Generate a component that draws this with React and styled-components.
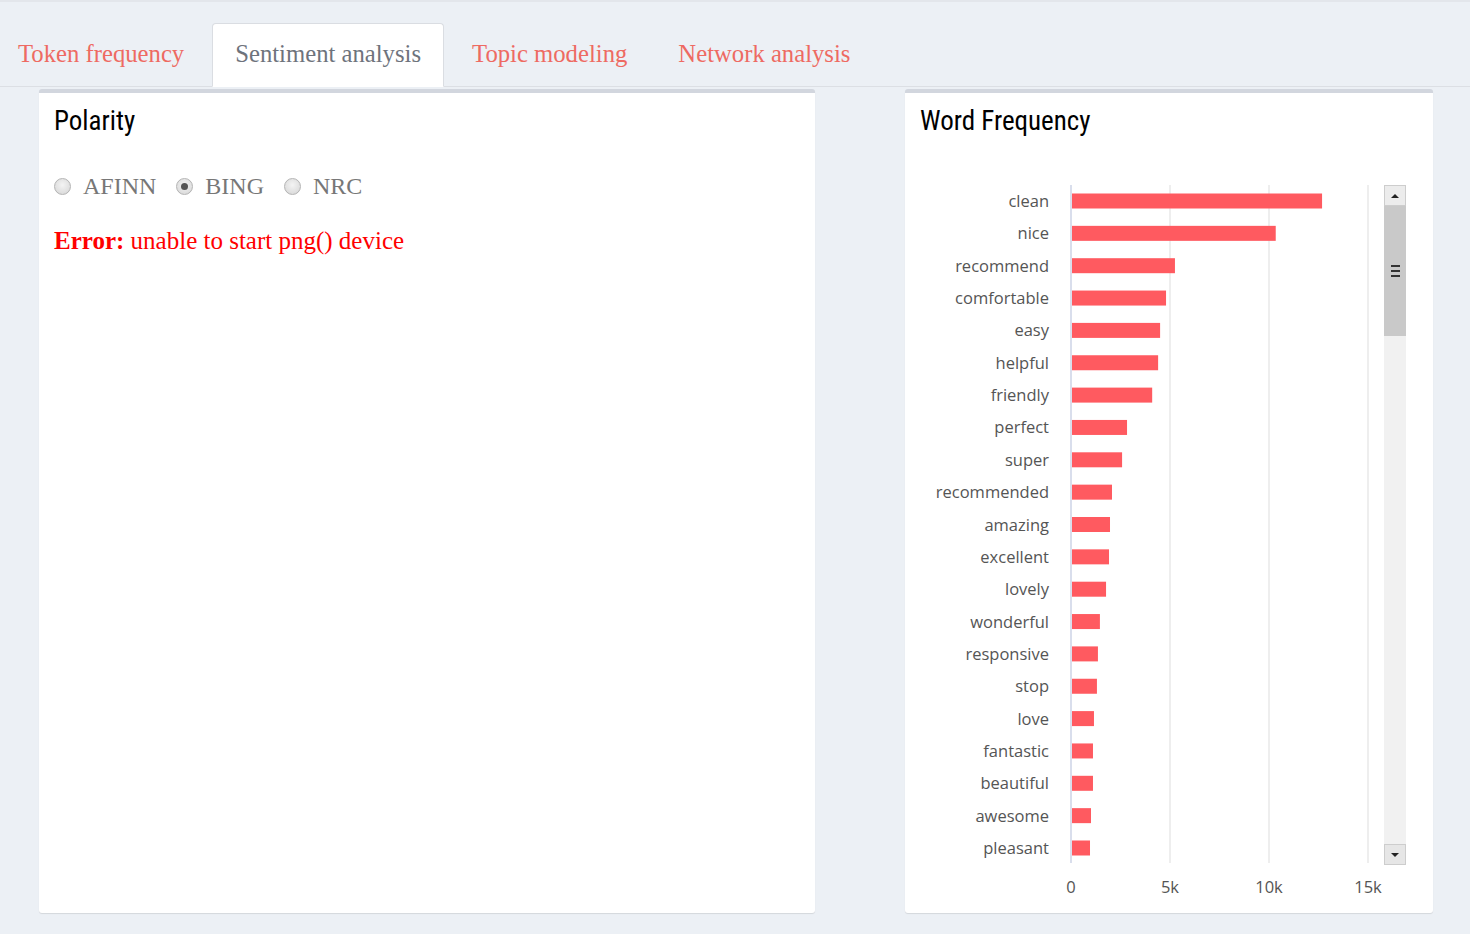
import React from 'react';
import styled, { createGlobalStyle } from 'styled-components';

const GlobalStyle = createGlobalStyle`
  html, body {
    margin: 0;
    padding: 0;
    background: #ecf0f5;
  }
  body {
    font-family: "Liberation Serif", serif;
  }
`;

const Page = styled.div`
  min-height: 934px;
  border-top: 2px solid #e3e6eb;
  box-sizing: border-box;
  background: #ecf0f5;
  overflow: hidden;
`;

const TabBar = styled.ul`
  display: flex;
  list-style: none;
  margin: 0;
  padding: 21px 0 0;
  margin-left: -5px;
  border-bottom: 1px solid #dcdfe4;
  height: 63px;
`;

const Tab = styled.li`
  margin-right: 5px;
  margin-bottom: -1px;
  padding: 17px 22px 20px;
  font-family: "Liberation Serif", serif;
  font-size: 24.7px;
  line-height: 25px;
  color: ${(p) => (p.active ? '#6e737c' : '#ee6a62')};
  background: ${(p) => (p.active ? '#fff' : 'transparent')};
  border: 1px solid ${(p) => (p.active ? '#dadde2' : 'transparent')};
  border-bottom-color: transparent;
  border-radius: 4px 4px 0 0;
  white-space: nowrap;
`;

const Columns = styled.div`
  display: grid;
  grid-template-columns: 776px 528px;
  column-gap: 90px;
  padding: 0 37px 0 39px;
  margin-top: 2px;
`;

const Box = styled.section`
  background: #fff;
  border-top: 4px solid #d2d6de;
  border-radius: 3px;
  box-shadow: 0 1px 1px rgba(0, 0, 0, 0.1);
  height: 824px;
  box-sizing: border-box;
`;

const BoxHeader = styled.div`
  padding: 12px 15px 0;
`;

const BoxTitle = styled.h3`
  margin: 0;
  font-family: "Liberation Sans Narrow", "Roboto Condensed", "Liberation Sans", sans-serif;
  font-weight: normal;
  font-size: 27px;
  line-height: 33px;
  color: #000;
`;

const BoxBody = styled.div`
  padding: 0 15px;
`;

const RadioRow = styled.div`
  display: flex;
  align-items: center;
  margin-top: 33px;
  height: 30px;
`;

const RadioLabel = styled.label`
  display: flex;
  align-items: center;
  margin-right: 20px;
  font-family: "Liberation Serif", serif;
  font-size: 24px;
  line-height: 30px;
  color: #777;
`;

const RadioDot = styled.span`
  width: 17px;
  height: 17px;
  box-sizing: border-box;
  border-radius: 50%;
  border: 1px solid #b4b4b4;
  background: radial-gradient(circle at 50% 40%, #f4f4f4, #d4d4d4);
  margin-right: 12px;
  display: flex;
  align-items: center;
  justify-content: center;
  &::after {
    content: '';
    width: 7px;
    height: 7px;
    border-radius: 50%;
    background: ${(p) => (p.checked ? '#555' : 'transparent')};
  }
`;

const ErrorLine = styled.div`
  margin-top: 25px;
  font-family: "Liberation Serif", serif;
  font-size: 25px;
  line-height: 30px;
  color: #f00;
  b {
    font-weight: bold;
  }
`;

const ChartRow = styled.div`
  display: flex;
  margin-top: 33px;
`;

const ChartSvg = styled.svg`
  display: block;
  overflow: visible;
  flex: none;
`;

const ScrollBar = styled.div`
  margin-top: 14px;
  margin-left: 4px;
  width: 22px;
  height: 680px;
  background: #f1f1f1;
  display: flex;
  flex-direction: column;
`;

const ScrollBtn = styled.div`
  height: 21px;
  box-sizing: border-box;
  background: ${(p) => (p.down ? '#e6e6e6' : '#ececec')};
  border: 1px solid #cdcdcd;
  display: flex;
  align-items: center;
  justify-content: center;
  margin-top: ${(p) => (p.down ? 'auto' : '0')};
  &::after {
    content: '';
    border-left: 4px solid transparent;
    border-right: 4px solid transparent;
    ${(p) => (p.down ? 'border-top: 4px solid #222;' : 'border-bottom: 4px solid #222;')}
  }
`;

const Thumb = styled.div`
  height: 130px;
  background: #c9c9c9;
  display: flex;
  flex-direction: column;
  align-items: center;
  justify-content: center;
  gap: 3px;
  span {
    width: 9px;
    height: 2px;
    background: #333;
  }
`;

const words = [
  ['clean', 12680], ['nice', 10340], ['recommend', 5250], ['comfortable', 4800],
  ['easy', 4500], ['helpful', 4400], ['friendly', 4100], ['perfect', 2830],
  ['super', 2580], ['recommended', 2070], ['amazing', 1970], ['excellent', 1920],
  ['lovely', 1770], ['wonderful', 1460], ['responsive', 1360], ['stop', 1310],
  ['love', 1160], ['fantastic', 1110], ['beautiful', 1110], ['awesome', 1010],
  ['pleasant', 960],
];

const X0 = 166;
const PER_K = 19.8;
const ROW0 = 30;
const STEP = 32.35;

function BarChart() {
  return (
    <ChartSvg width="475" height="730">
      {[5, 10, 15].map((k) => (
        <line key={k} x1={X0 + k * PER_K} x2={X0 + k * PER_K} y1="14" y2="692" stroke="#e8e8e8" strokeWidth="1.5" />
      ))}
      <line x1={X0} x2={X0} y1="14" y2="692" stroke="#cdd3e6" strokeWidth="1.5" />
      {words.map(([w, n], i) => {
        const cy = ROW0 + i * STEP;
        return (
          <g key={w}>
            <rect x={X0 + 1} y={cy - 7.5} width={(n / 1000) * PER_K - 1} height="15" fill="#ff5a60" />
            <text x="144" y={cy + 6} textAnchor="end" fontFamily="Open Sans, sans-serif" fontSize="16.5" fill="#555">{w}</text>
          </g>
        );
      })}
      {['0', '5k', '10k', '15k'].map((t, i) => (
        <text key={t} x={X0 + i * 5 * PER_K} y="722" textAnchor="middle" fontFamily="Open Sans, sans-serif" fontSize="16.5" fill="#555">{t}</text>
      ))}
    </ChartSvg>
  );
}

export default function App() {
  const tabs = ['Token frequency', 'Sentiment analysis', 'Topic modeling', 'Network analysis'];
  return (
    <Page>
      <GlobalStyle />
      <TabBar>
        {tabs.map((t) => (
          <Tab key={t} active={t === 'Sentiment analysis'}>{t}</Tab>
        ))}
      </TabBar>
      <Columns>
        <Box>
          <BoxHeader>
            <BoxTitle>Polarity</BoxTitle>
          </BoxHeader>
          <BoxBody>
            <RadioRow>
              <RadioLabel><RadioDot />AFINN</RadioLabel>
              <RadioLabel><RadioDot checked />BING</RadioLabel>
              <RadioLabel><RadioDot />NRC</RadioLabel>
            </RadioRow>
            <ErrorLine><b>Error:</b> unable to start png() device</ErrorLine>
          </BoxBody>
        </Box>
        <Box>
          <BoxHeader>
            <BoxTitle>Word Frequency</BoxTitle>
          </BoxHeader>
          <ChartRow>
            <BarChart />
            <ScrollBar>
              <ScrollBtn />
              <Thumb><span /><span /><span /></Thumb>
              <ScrollBtn down />
            </ScrollBar>
          </ChartRow>
        </Box>
      </Columns>
    </Page>
  );
}
